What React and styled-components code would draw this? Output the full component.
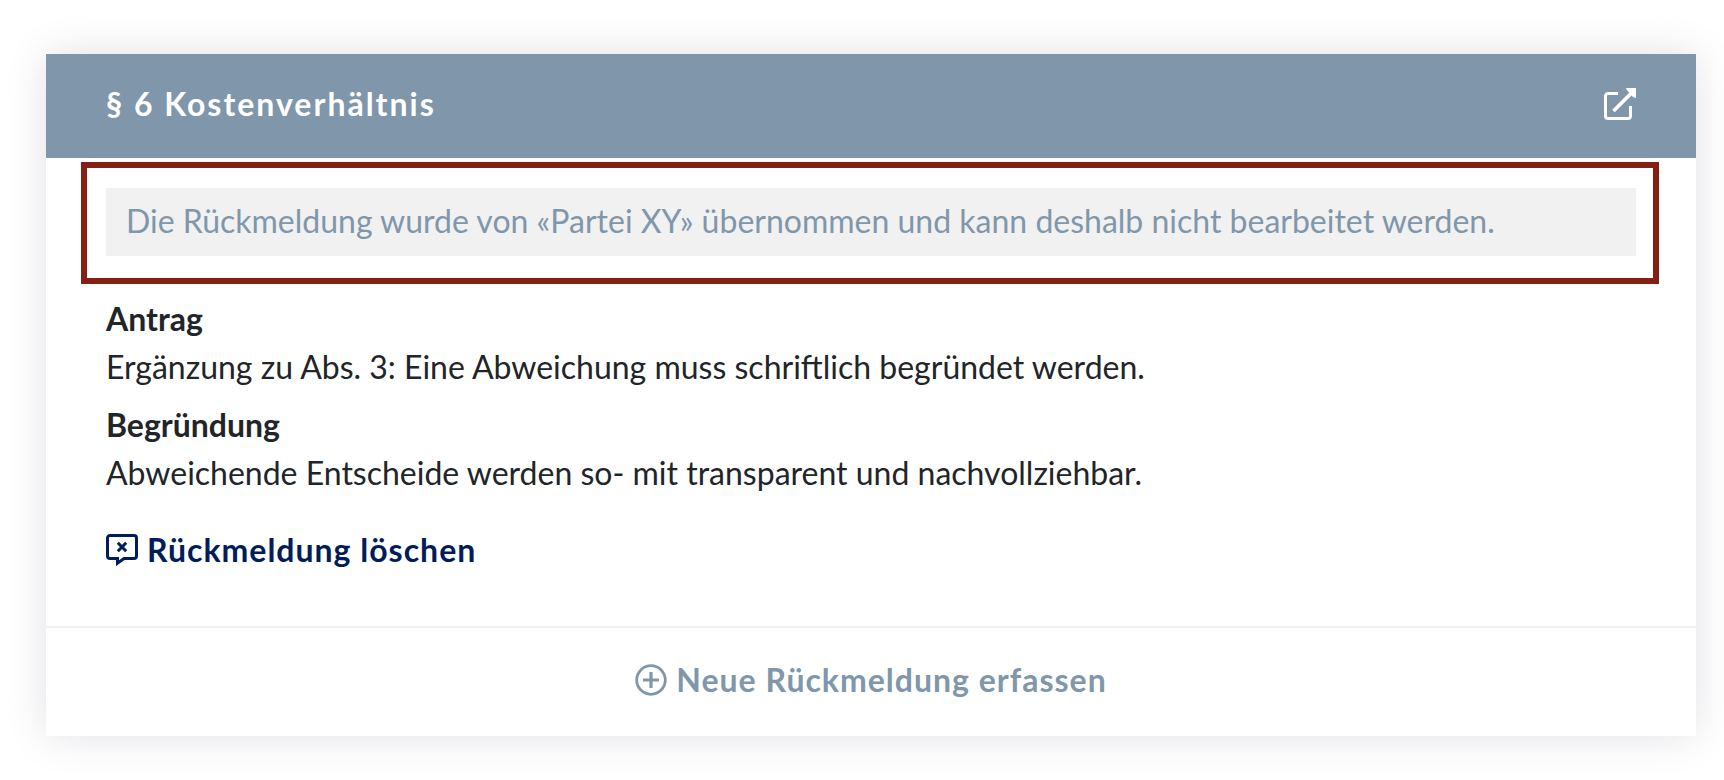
import React from "react";
import styled, { createGlobalStyle } from "styled-components";

const GlobalStyle = createGlobalStyle`
  *, *::before, *::after { box-sizing: border-box; }
  body {
    margin: 0;
    background: #fff;
    color: #212529;
    font-family: Lato, "Open Sans", sans-serif;
    font-size: 32px;
    line-height: 48px;
  }
`;

const Page = styled.main`
  padding: 54px 28px 44px 46px;
`;

const Card = styled.article`
  background: #fff;
  box-shadow: 0 0 40px rgba(0, 0, 50, 0.12);
`;

const CardHeader = styled.header`
  display: flex;
  align-items: center;
  justify-content: space-between;
  padding: 26px 60px 30px;
  background: #8097ab;
  color: #fff;
`;

const Title = styled.h2`
  margin: 0;
  font-size: 32px;
  font-weight: 700;
  letter-spacing: 2px;
`;

const IconLink = styled.a`
  display: flex;
  color: inherit;
`;

const Highlight = styled.div`
  margin: 4px 37px 0 35px;
  padding: 20px 17px 22px 19px;
  border: 6px solid #851f13;
`;

const Notice = styled.p`
  margin: 0;
  padding: 9px 20px 11px;
  background: #f1f1f1;
  color: #8097ab;
`;

const CardBody = styled.div`
  padding: 11px 60px 52px;
`;

const Entry = styled.section`
  & + & { margin-top: 10px; }
`;

const EntryTitle = styled.h3`
  margin: 0;
  font-size: 32px;
  font-weight: 700;
`;

const EntryText = styled.p`
  margin: 0;
`;

const ActionButton = styled.button`
  display: inline-flex;
  align-items: center;
  gap: 9px;
  padding: 0;
  border: 0;
  background: none;
  color: ${({ $tone }) => ($tone === "muted" ? "#8097ab" : "#001c5a")};
  font: inherit;
  font-weight: 700;
  letter-spacing: 1px;
  cursor: pointer;
`;

const DeleteRow = styled.div`
  display: flex;
  margin-top: 29px;
`;

const CardFooter = styled.footer`
  display: flex;
  justify-content: center;
  padding: 28px 60px 32px;
  border-top: 2px solid #f1f1f1;
`;

const Icon = styled.svg`
  flex: none;
  width: 32px;
  height: 32px;
`;

const OpenIcon = () => (
  <Icon viewBox="0 0 32 32" fill="none" stroke="currentColor" strokeWidth="3" aria-hidden="true">
    <path d="M14 5.500H4a2.500 2.500 0 0 0-2.500 2.500v20A2.500 2.500 0 0 0 4 30.500h20a2.500 2.500 0 0 0 2.500-2.500V18" />
    <path d="M9.500 23 28 4.500" strokeWidth="3.800" />
    <path d="M22 0h10v10l-3-1L22.700 2Z" fill="currentColor" stroke="none" />
  </Icon>
);

const DeleteIcon = () => (
  <Icon viewBox="0 0 32 32" fill="none" stroke="currentColor" strokeWidth="3" aria-hidden="true">
    <path d="M4 1.500h24A2.500 2.500 0 0 1 30.500 4v18a2.500 2.500 0 0 1-2.500 2.500H18l-6.500 4.700v-4.700H4A2.500 2.500 0 0 1 1.500 22V4A2.500 2.500 0 0 1 4 1.500Z" />
    <path d="m11.800 8.800 8.400 8.400m0-8.400-8.400 8.400" />
  </Icon>
);

const AddIcon = () => (
  <Icon viewBox="0 0 32 32" fill="none" stroke="currentColor" strokeWidth="2.800" aria-hidden="true">
    <circle cx="16" cy="16" r="14.300" />
    <path d="M16 8v16M8 16h16" strokeWidth="3.200" />
  </Icon>
);

export default function App() {
  return (
    <>
      <GlobalStyle />
      <Page>
        <Card>
          <CardHeader>
            <Title>§ 6 Kostenverhältnis</Title>
            <IconLink href="#paragraph-6" aria-label="§ 6 öffnen">
              <OpenIcon />
            </IconLink>
          </CardHeader>
          <Highlight>
            <Notice>
              Die Rückmeldung wurde von «Partei XY» übernommen und kann deshalb nicht bearbeitet werden.
            </Notice>
          </Highlight>
          <CardBody>
            <Entry>
              <EntryTitle>Antrag</EntryTitle>
              <EntryText>Ergänzung zu Abs. 3: Eine Abweichung muss schriftlich begründet werden.</EntryText>
            </Entry>
            <Entry>
              <EntryTitle>Begründung</EntryTitle>
              <EntryText>Abweichende Entscheide werden so- mit transparent und nachvollziehbar.</EntryText>
            </Entry>
            <DeleteRow>
              <ActionButton type="button">
                <DeleteIcon />
                Rückmeldung löschen
              </ActionButton>
            </DeleteRow>
          </CardBody>
          <CardFooter>
            <ActionButton type="button" $tone="muted">
              <AddIcon />
              Neue Rückmeldung erfassen
            </ActionButton>
          </CardFooter>
        </Card>
      </Page>
    </>
  );
}
